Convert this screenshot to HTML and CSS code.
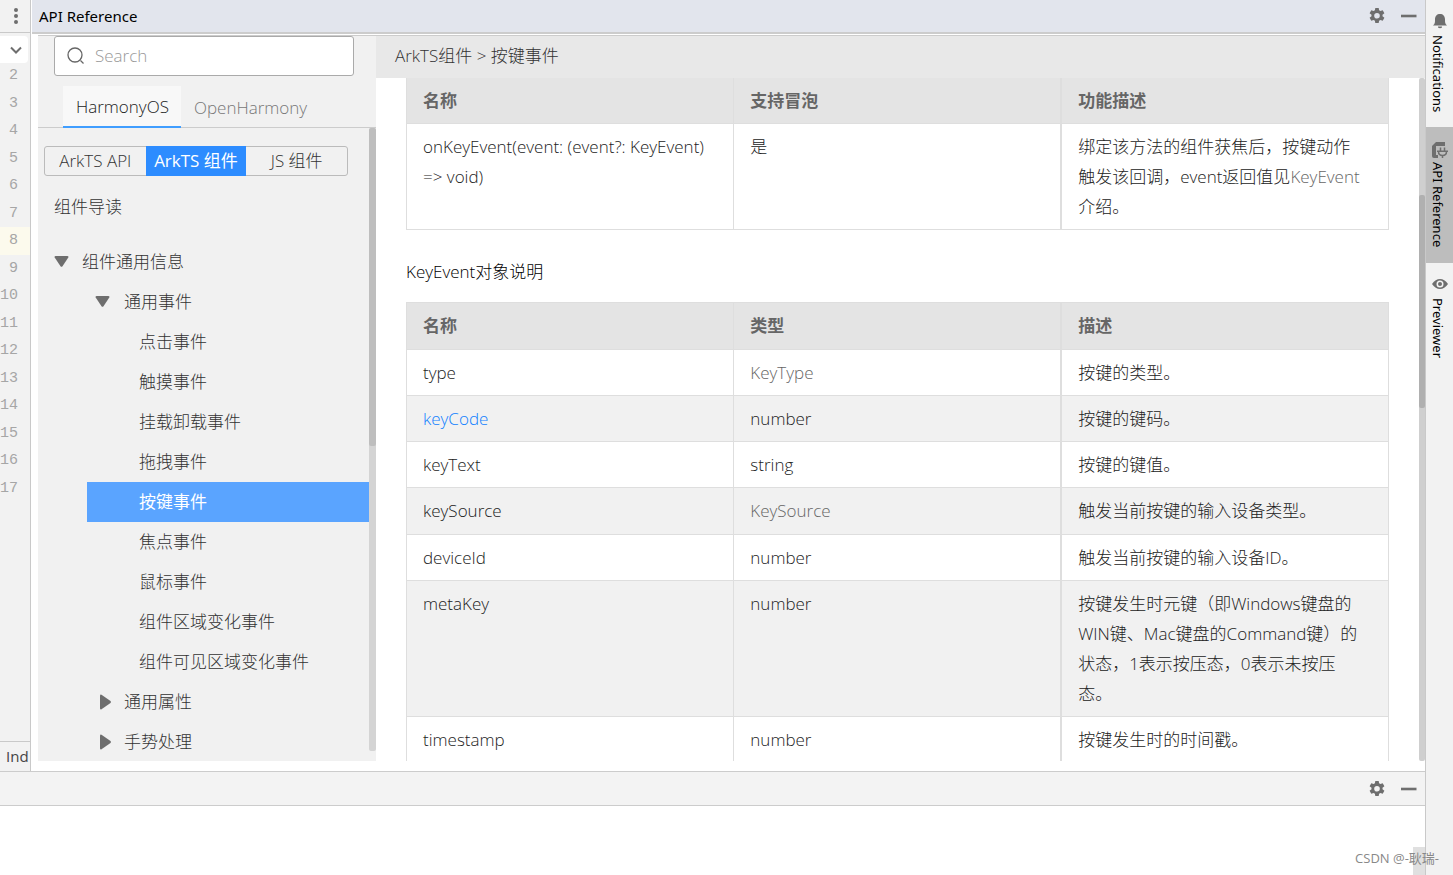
FILE: index.html
```html
<!DOCTYPE html>
<html lang="zh-CN">
<head>
<meta charset="utf-8">
<title>API Reference</title>
<link rel="stylesheet" href="styles.css">
</head>
<body>
<svg width="0" height="0" class="sprite" aria-hidden="true">
  <symbol id="gear" viewBox="0 0 16 16"><path fill-rule="evenodd" d="M6.3 0h3.4l.4 2.3 1.3.8 2.3-.9 1.7 3-1.9 1.5v1.6l1.9 1.5-1.7 3-2.3-.9-1.3.8-.4 2.3H6.300l-.4-2.300-1.300-.8-2.300.9-1.700-3 1.900-1.500V6.700L.6 5.200l1.700-3 2.300.9 1.300-.8zM8 4.900a2.800 2.800 0 1 0 0 5.600 2.800 2.800 0 0 0 0-5.600z"/></symbol>
  <symbol id="minus" viewBox="0 0 16 16"><path d="M0 6.700h15.500v2.600H0z"/></symbol>
  <symbol id="down" viewBox="0 0 16 12"><path d="M1.500 0h12q1.500.3.8 1.500L8.500 10.200q-1 1-2 0L.7 1.500Q0 .3 1.500 0z"/></symbol>
  <symbol id="right" viewBox="0 0 12 16"><path d="M0 1.500Q.3 0 1.500.7l9 6.300q1 1 0 2l-9 6.300Q.3 16 0 14.500z"/></symbol>
</svg>
<div class="ide">
  <div class="main">
    <div class="workspace">
      <aside class="editor">
        <div class="editor-top">
          <button class="icon-btn" aria-label="More"><svg width="4" height="16" viewBox="0 0 4 16"><circle cx="2" cy="2" r="2"/><circle cx="2" cy="8" r="2"/><circle cx="2" cy="14" r="2"/></svg></button>
        </div>
        <button class="combo" aria-label="Expand"><svg width="12" height="8" viewBox="0 0 12 8"><path d="M1 1.500l5 5 5-5" fill="none" stroke="#6e6e6e" stroke-width="2"/></svg></button>
        <ol class="lines">
          <li>2</li><li>3</li><li>4</li><li>5</li><li>6</li><li>7</li><li class="current">8</li><li>9</li><li>10</li><li>11</li><li>12</li><li>13</li><li>14</li><li>15</li><li>16</li><li>17</li>
        </ol>
        <div class="crumb">Ind</div>
      </aside>
      <section class="tool">
        <header class="tool-head">
          <h1>API Reference</h1>
          <div class="actions">
            <button class="icon-btn" aria-label="Settings"><svg width="16" height="16"><use href="#gear"/></svg></button>
            <button class="icon-btn" aria-label="Hide"><svg width="16" height="16"><use href="#minus"/></svg></button>
          </div>
        </header>
        <div class="browser">
          <nav class="side">
            <label class="search">
              <svg class="outline" width="18" height="18" viewBox="0 0 18 18"><circle cx="8" cy="8" r="7"/><path d="M13.500 13.500l3 3"/></svg>
              <input type="text" placeholder="Search" aria-label="Search">
            </label>
            <div class="tabs">
              <button class="tab active">HarmonyOS</button>
              <button class="tab">OpenHarmony</button>
            </div>
            <div class="side-body">
              <div class="tree">
                <div class="segment">
                  <button>ArkTS API</button><button class="active">ArkTS 组件</button><button>JS 组件</button>
                </div>
                <a class="guide" href="#">组件导读</a>
                <a class="node l1" href="#"><svg width="16" height="12"><use href="#down"/></svg>组件通用信息</a>
                <a class="node l2" href="#"><svg width="16" height="12"><use href="#down"/></svg>通用事件</a>
                <a class="node l3" href="#">点击事件</a>
                <a class="node l3" href="#">触摸事件</a>
                <a class="node l3" href="#">挂载卸载事件</a>
                <a class="node l3" href="#">拖拽事件</a>
                <a class="node l3 active" href="#">按键事件</a>
                <a class="node l3" href="#">焦点事件</a>
                <a class="node l3" href="#">鼠标事件</a>
                <a class="node l3" href="#">组件区域变化事件</a>
                <a class="node l3" href="#">组件可见区域变化事件</a>
                <a class="node l2 closed" href="#"><svg width="12" height="16"><use href="#right"/></svg>通用属性</a>
                <a class="node l2 closed" href="#"><svg width="12" height="16"><use href="#right"/></svg>手势处理</a>
              </div>
              <div class="track side-track"><div class="thumb"></div></div>
            </div>
          </nav>
          <main class="doc">
            <div class="path">ArkTS组件 &gt; 按键事件</div>
            <div class="doc-body">
              <article>
                <table>
                  <thead><tr><th>名称</th><th>支持冒泡</th><th>功能描述</th></tr></thead>
                  <tbody><tr><td>onKeyEvent(event: (event?: KeyEvent)<br>=&gt; void)</td><td>是</td><td>绑定该方法的组件获焦后，按键动作<br>触发该回调，event返回值见<a href="#">KeyEvent</a><br>介绍。</td></tr></tbody>
                </table>
                <h2>KeyEvent对象说明</h2>
                <table class="striped">
                  <thead><tr><th>名称</th><th>类型</th><th>描述</th></tr></thead>
                  <tbody>
                    <tr><td>type</td><td><a href="#">KeyType</a></td><td>按键的类型。</td></tr>
                    <tr><td><a class="hot" href="#">keyCode</a></td><td>number</td><td>按键的键码。</td></tr>
                    <tr><td>keyText</td><td>string</td><td>按键的键值。</td></tr>
                    <tr><td>keySource</td><td><a href="#">KeySource</a></td><td>触发当前按键的输入设备类型。</td></tr>
                    <tr><td>deviceId</td><td>number</td><td>触发当前按键的输入设备ID。</td></tr>
                    <tr><td>metaKey</td><td>number</td><td>按键发生时元键（即Windows键盘的<br>WIN键、Mac键盘的Command键）的<br>状态，1表示按压态，0表示未按压<br>态。</td></tr>
                    <tr><td>timestamp</td><td>number</td><td>按键发生时的时间戳。</td></tr>
                  </tbody>
                </table>
              </article>
              <div class="track doc-track"><div class="thumb"></div></div>
            </div>
          </main>
        </div>
      </section>
    </div>
    <header class="bottom-head">
      <div class="actions">
        <button class="icon-btn" aria-label="Settings"><svg width="16" height="16"><use href="#gear"/></svg></button>
        <button class="icon-btn" aria-label="Hide"><svg width="16" height="16"><use href="#minus"/></svg></button>
      </div>
    </header>
    <div class="bottom-body"><div class="bottom-thumb"></div></div>
  </div>
  <aside class="rail">
    <button><svg width="16" height="16" viewBox="0 0 16 16"><path d="M1 12.500c2-1.500 2-3 2-6C3 3 5 1 8 1s5 2 5 5.500c0 3 0 4.500 2 6zM6 13.500h4v1q-2 1.500-4 0z"/></svg><span>Notifications</span></button>
    <button class="active"><svg width="16" height="16" viewBox="0 0 16 16"><path d="M4 0h9v4H4v9h2v3H2q-2 0-2-2V4z"/><path class="plug" d="M8.500 5.500V9M12.500 5.500V9M5 9.300h11M6.500 9.500q0 4 4 4t4-4M10.500 13v3"/></svg><span>API Reference</span></button>
    <button><svg width="16" height="16" viewBox="0 0 16 16"><path fill-rule="evenodd" d="M0 8q3.500-5 8-5t8 5q-3.500 5-8 5T0 8zm8-3.500a3.500 3.500 0 1 0 0 7 3.500 3.500 0 0 0 0-7z"/><circle cx="8" cy="8" r="2"/></svg><span>Previewer</span></button>
  </aside>
</div>
<div class="mark">CSDN @-耿瑞-</div>
</body>
</html>
```
FILE: styles.css
```css
* { box-sizing: border-box; }
body { margin: 0; background: #fff; color: #222; font: 300 17px/30px "Open Sans", "Noto Sans CJK SC", sans-serif; }
button { margin: 0; padding: 0; border: 0; background: none; font: inherit; color: inherit; }
a { color: inherit; text-decoration: none; }
svg { display: block; flex: none; fill: #6e6e6e; }
.outline { fill: none; stroke: #666; stroke-width: 1.3; }
.plug { fill: none; stroke: #6e6e6e; stroke-width: 1.5; }
.sprite { position: absolute; }
.ide { display: flex; height: 100vh; overflow: hidden; }
.main { flex: 1; min-width: 0; display: grid; grid-template-rows: minmax(0, 1fr) 35px 69px; }
.workspace { display: flex; min-height: 0; }

.editor { width: 31px; flex: none; display: flex; flex-direction: column; background: #f2f2f2; border-right: 1px solid #c9c9c9; overflow: hidden; }
.editor-top { height: 33px; flex: none; display: flex; padding-left: 14px; align-items: center; border-bottom: 1px solid #c9c9c9; }
.combo { flex: none; width: 28px; height: 27px; margin-top: 3px; padding-left: 10px; background: #fff; border-radius: 0 4px 4px 0; }
.lines { display: grid; grid-auto-rows: 1fr; height: 440px; margin: -1px 0 0; padding: 0; list-style: none; font: 15px "Liberation Mono", monospace; color: #a6a6a6; }
.lines li { display: flex; align-items: center; justify-content: flex-end; padding-right: 13px; }
.lines .current { background: #fcfaed; }
.crumb { height: 30px; margin-top: auto; padding-left: 6px; border-top: 1px solid #c9c9c9; font: 15px/28px "Open Sans", sans-serif; color: #444; }

.tool { flex: 1; min-width: 0; margin-left: 1px; display: flex; flex-direction: column; }
.tool-head { height: 34px; flex: none; display: flex; align-items: center; justify-content: space-between; padding: 0 8px 0 7px; background: #e2e5ed; border-bottom: 2px solid #ccc; }
.tool-head h1 { margin: 0; font: 15px/32px "Noto Sans", sans-serif; color: #000; }
.actions { display: flex; gap: 16px; }
.browser { flex: 1; min-height: 0; display: flex; margin: 1px 0 10px 6px; border-top: 1px solid #ccc; }

.side { width: 338px; flex: none; display: flex; flex-direction: column; background: #f1f1f1; color: #333; }
.search { height: 40px; flex: none; display: flex; align-items: center; gap: 10px; margin: 0 22px 0 16px; padding: 0 12px; background: #fff; border: 1px solid #aaa; border-radius: 3px; }
.search input { flex: 1; min-width: 0; padding: 0; border: 0; outline: 0; background: none; font: inherit; }
.search input::placeholder { color: #999; }
.tabs { display: flex; height: 52px; flex: none; padding: 10px 0 0 25px; border-bottom: 1px solid #ccc; }
.tab { height: 42px; padding: 2px 12px 0 13px; color: #777; }
.tab.active { background: #f8f8f8; color: #222; border-bottom: 2px solid #409eff; }
.side-body { flex: 1; min-height: 0; display: flex; overflow: hidden; }
.tree { flex: 1; min-width: 0; padding-top: 18px; overflow: hidden; }
.segment { display: grid; grid-template-columns: repeat(3, 1fr); height: 30px; margin: 0 21px 0 6px; border: 1px solid #bbb; border-radius: 3px; line-height: 28px; }
.segment .active { margin: -1px 0; background: #2d8cff; color: #fff; font-weight: 400; }
.guide { display: block; padding-left: 16px; line-height: 40px; margin: 11px 0 15px; }
.node { display: flex; align-items: center; height: 40px; }
.l1 { padding-left: 16px; gap: 12px; }
.l2 { padding-left: 57px; gap: 13px; }
.closed { padding-left: 62px; gap: 12px; }
.l3 { margin-left: 49px; padding-left: 52px; }
.l3.active { background: #5aa4ff; color: #fff; font-weight: 400; }
.track { width: 7px; flex: none; background: #d4d4d4; border-radius: 2px; }
.side-track { margin-bottom: 10px; }
.thumb { border-radius: 2px; }
.side-track .thumb { height: 51%; background: #bebebe; }

.doc { flex: 1; min-width: 0; display: flex; flex-direction: column; }
.path { height: 42px; flex: none; padding-left: 19px; line-height: 40px; background: #e8e8e8; color: #333; }
.doc-body { flex: 1; min-height: 0; display: flex; }
article { flex: 1; min-width: 0; padding: 0 30px; overflow: hidden; }
table { width: 100%; table-layout: fixed; border-collapse: collapse; }
th, td { padding: 8px 16px 7px; border: 1px solid #dedede; text-align: left; vertical-align: top; }
th:last-child, td:last-child { border-left-width: 2px; }
th { background: #e4e4e4; color: #666; font-weight: 700; }
article > table:first-child th { border-top: 0; }
.striped th { padding-bottom: 8px; }
.striped tbody tr:nth-child(even) { background: #f1f1f1; }
.striped tbody tr:nth-child(4) td { padding-bottom: 8px; }
td a { color: #666; }
td a.hot { color: #1080ff; }
h2 { margin: 27px 0 15px; font: inherit; color: #000; }
.doc-track { width: 6px; padding-top: 117px; background: #cfcfcf; }
.doc-track .thumb { height: 213px; background: #b0b0b0; }

.bottom-head { display: flex; align-items: center; justify-content: flex-end; padding-right: 8px; background: #f3f3f3; border: solid #ccc; border-width: 1px 0; }
.bottom-body { display: flex; justify-content: flex-end; align-items: flex-end; }
.bottom-thumb { width: 12px; height: 28px; background: #e0e0e0; }

.rail { width: 28px; flex: none; display: flex; flex-direction: column; background: #f2f2f2; border-left: 1px solid #c9c9c9; }
.rail button { display: flex; flex-direction: column; align-items: center; gap: 6px; padding: 13px 0 15px; }
.rail button.active { background: #bdbdbd; gap: 4px; padding: 15px 0; }
.rail span { writing-mode: vertical-rl; margin-right: 4px; font: 13px/20px "Noto Sans", sans-serif; color: #000; }
.mark { position: absolute; right: 14px; bottom: 8px; font: 13px/18px "Open Sans", "Noto Sans CJK SC", sans-serif; color: #888; }
```
